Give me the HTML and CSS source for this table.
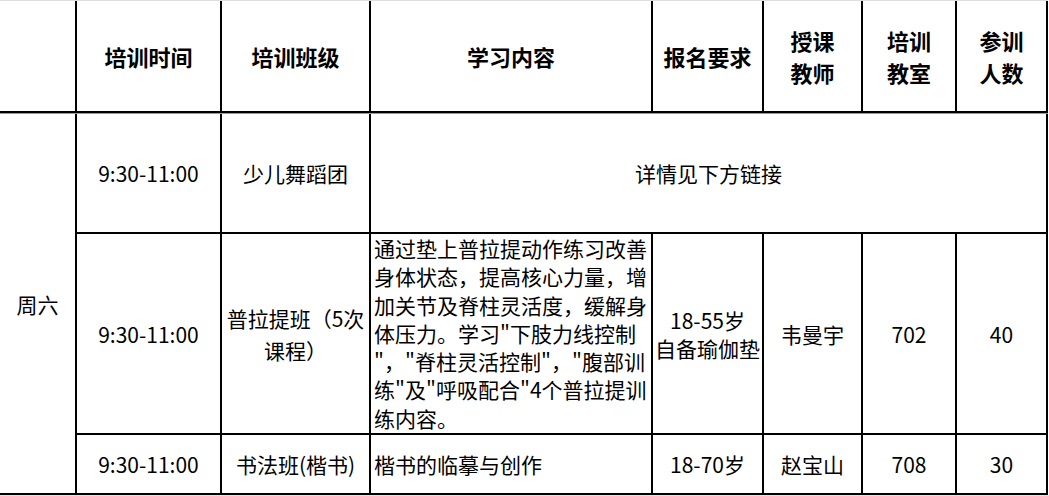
FILE: index.html
```html
<!DOCTYPE html>
<html lang="zh-CN">
<head>
<meta charset="utf-8">
<title>培训课程表</title>
<link rel="stylesheet" href="styles.css">
</head>
<body>
<div class="sheet">
  <div class="cell head"></div>
  <div class="cell head">培训时间</div>
  <div class="cell head">培训班级</div>
  <div class="cell head">学习内容</div>
  <div class="cell head">报名要求</div>
  <div class="cell head two">授课<br>教师</div>
  <div class="cell head two">培训<br>教室</div>
  <div class="cell head two last">参训<br>人数</div>

  <div class="sep"></div>

  <div class="cell day">周六</div>

  <div class="cell">9:30-11:00</div>
  <div class="cell">少儿舞蹈团</div>
  <div class="cell wide last">详情见下方链接</div>

  <div class="cell">9:30-11:00</div>
  <div class="cell wrap">普拉提班（5次课程）</div>
  <div class="cell content">通过垫上普拉提动作练习改善<br>身体状态，提高核心力量，增<br>加关节及脊柱灵活度，缓解身<br>体压力。学习"下肢力线控制<br>"，"脊柱灵活控制"，"腹部训<br>练"及"呼吸配合"4个普拉提训<br>练内容。</div>
  <div class="cell lines">18-55岁<br>自备瑜伽垫</div>
  <div class="cell">韦曼宇</div>
  <div class="cell">702</div>
  <div class="cell last">40</div>

  <div class="cell">9:30-11:00</div>
  <div class="cell">书法班(楷书)</div>
  <div class="cell left">楷书的临摹与创作</div>
  <div class="cell">18-70岁</div>
  <div class="cell">赵宝山</div>
  <div class="cell">708</div>
  <div class="cell last">30</div>
</div>
<div class="below"></div>
</body>
</html>
```

FILE: styles.css
```css
html, body {
  margin: 0;
  padding: 0;
  background: #ffffff;
}

body {
  font-family: "Noto Sans CJK SC", "Microsoft YaHei", "Noto Sans", sans-serif;
  color: #000000;
  font-size: 21px;
}

.sheet {
  width: 1048px;
  border-top: 1px solid #dedede;
  display: grid;
  grid-template-columns: 77px 145px 149px 282px 111px 99px 94px 91px;
  grid-template-rows: 112px 1px 120px 201px 60px;
}

.cell {
  box-sizing: border-box;
  border-right: 2px solid #000;
  border-bottom: 2px solid #000;
  display: flex;
  align-items: center;
  justify-content: center;
  text-align: center;
  line-height: 28px;
  white-space: nowrap;
}

.head {
  font-weight: 700;
  font-size: 22px;
}

.head.two {
  line-height: 32px;
}

.sep {
  grid-column: 1 / 9;
  background: #5fb990;
}

.day {
  grid-column: 1;
  grid-row: 3 / 6;
}

.wide {
  grid-column: 4 / 9;
}

.wrap {
  white-space: normal;
  line-height: 32px;
  padding: 0 2px;
}

.content {
  align-items: flex-start;
  justify-content: flex-start;
  text-align: left;
  padding-left: 3px;
  line-height: 28.3px;
}

.left {
  justify-content: flex-start;
  text-align: left;
  padding-left: 3px;
}

.below {
  width: 1049px;
  height: 2px;
  background: #dfe4ee;
}
```
